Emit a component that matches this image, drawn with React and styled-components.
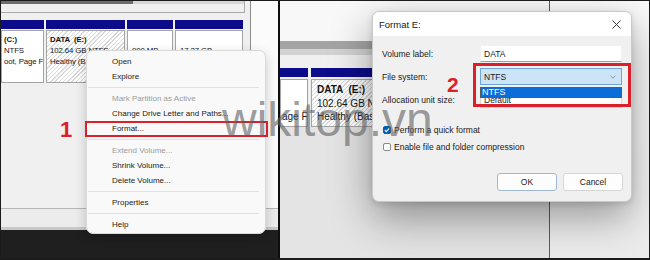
import React from "react";
import styled, { createGlobalStyle } from "styled-components";

const navy = "#0c0c8a";
const red = "#dc2029";
const hatch = "repeating-linear-gradient(135deg, #ffffff 0 2px, #d9d9d9 2px 3px)";

const GlobalStyle = createGlobalStyle`
  html, body { margin: 0; padding: 0; background: #fff; }
  body { font-family: "Liberation Sans", Arial, sans-serif; }
`;

const Frame = styled.div`
  position: relative;
  width: 650px;
  height: 260px;
  box-sizing: border-box;
  border: 1px solid #1b1b1b;
  border-bottom-width: 2px;
  display: flex;
  overflow: hidden;
  background: #1b1b1b;
  font-family: "Liberation Sans", Arial, sans-serif;
  color: #1a1a1a;
`;

const LeftPanel = styled.section`
  position: relative;
  width: 277px;
  flex-shrink: 0;
  display: flex;
  flex-direction: column;
`;

const Divider = styled.div`
  width: 2px;
  flex-shrink: 0;
  background: #0e0e0e;
`;

const RightPanel = styled.section`
  position: relative;
  flex: 1;
  display: flex;
  background: #f0f0f0;
`;

/* ---------- left: disk management behind the menu ---------- */

const LeftMain = styled.div`
  display: flex;
  height: 207px;
`;

const MgmtWindow = styled.div`
  width: 249px;
  background: #f0f0f0;
  border-right: 1px solid #8d8d8d;
  display: flex;
  flex-direction: column;
`;

const WhiteColumn = styled.div`
  flex: 1;
  background: #fbfbfb;
`;

const ScrollStrip = styled.div`
  width: 243px;
  height: 11px;
  border-right: 1px solid #a9a9a9;
  border-bottom: 1px solid #a9a9a9;
`;

const ScrollTrack = styled.div`
  height: 3px;
  background: #d5d5d5;
`;

const ScrollThumb = styled.div`
  width: 132px;
  height: 3px;
  background: #6d6d6d;
`;

const DiskRow = styled.div`
  display: flex;
  gap: ${(p) => p.$gap}px;
  margin-top: ${(p) => p.$top}px;
`;

const Partition = styled.div`
  width: ${(p) => p.$w}px;
  flex-shrink: 0;
  display: flex;
  flex-direction: column;
  gap: ${(p) => p.$gap}px;
`;

const PartHead = styled.div`
  height: 9px;
  background: ${navy};
`;

const PartBody = styled.div`
  height: ${(p) => p.$h}px;
  box-sizing: border-box;
  border: 1px solid #a5a5a5;
  background: ${(p) => (p.$selected ? hatch : "#fff")};
  padding: 3px 0 0 ${(p) => p.$pad}px;
  font-size: ${(p) => p.$fs}px;
  line-height: ${(p) => p.$lh}px;
  letter-spacing: ${(p) => p.$ls}px;
  white-space: pre;
  overflow: hidden;
  color: #151515;
`;

const PartTitle = styled.div`
  font-weight: bold;
`;

const StatusBand = styled.div`
  height: 18px;
  background: #ececec;
  border-top: 1px solid #b6b6b6;
  border-bottom: 3px solid #c8c8c8;
`;

const Taskbar = styled.div`
  flex: 1;
  background: #1f1f1f;
`;

/* ---------- context menu ---------- */

const Menu = styled.div`
  position: absolute;
  left: 85px;
  top: 49px;
  width: 180px;
  box-sizing: border-box;
  padding: 3px 0 1px;
  background: #f9f9f9;
  border: 1px solid #d9d9d9;
  border-radius: 7px;
  box-shadow: 0 4px 12px rgba(0, 0, 0, 0.2);
`;

const MenuItem = styled.div`
  height: 15px;
  line-height: 15px;
  padding-left: 25px;
  font-size: 8px;
  color: ${(p) => (p.$disabled ? "#9b9b9b" : "#1b1b1b")};
  white-space: nowrap;
`;

const MenuSep = styled.div`
  height: 1px;
  margin: 3px 6px 3px 1px;
  background: #e1e1e1;
`;

const Highlight = styled.div`
  position: absolute;
  left: ${(p) => p.$x}px;
  top: ${(p) => p.$y}px;
  width: ${(p) => p.$w}px;
  height: ${(p) => p.$h}px;
  box-sizing: border-box;
  border: ${(p) => p.$b}px solid ${red};
  pointer-events: none;
  z-index: 3;
`;

const StepNumber = styled.div`
  position: absolute;
  left: ${(p) => p.$x}px;
  top: ${(p) => p.$y}px;
  font-size: ${(p) => p.$fs}px;
  line-height: ${(p) => p.$fs}px;
  font-weight: bold;
  color: ${red};
`;

/* ---------- right: window behind the dialog ---------- */

const BackWindow = styled.div`
  width: 269px;
  border-right: 1px solid #5b5b5b;
  display: flex;
  flex-direction: column;
  background: #f0f0f0;
`;

const BlankTop = styled.div`
  height: 40px;
  background: #f8f8f8;
`;

const Band = styled.div`
  height: ${(p) => p.$h}px;
  background: ${(p) => p.$c};
`;

const BackFill = styled.div`
  flex: 1;
  background: #e4e4e4;
`;

const SideArea = styled.div`
  flex: 1;
  background: linear-gradient(#fafafa 0%, #f6f6f6 70%, #ebebeb 100%);
`;

/* ---------- format dialog ---------- */

const Dialog = styled.div`
  position: absolute;
  left: 92px;
  top: 10px;
  width: 260px;
  height: 191px;
  box-sizing: border-box;
  border: 1px solid #c9c9c9;
  border-radius: 7px;
  overflow: hidden;
  background: #f0f0f0;
  box-shadow: 0 16px 42px rgba(0, 0, 0, 0.38), 0 2px 6px rgba(0, 0, 0, 0.12);
  display: flex;
  flex-direction: column;
`;

const TitleBar = styled.div`
  height: 24px;
  background: #fff;
  display: flex;
  align-items: center;
  justify-content: space-between;
  padding: 0 10px 0 6px;
  font-size: 9.5px;
`;

const DialogBody = styled.div`
  flex: 1;
  padding: 9px 8px 0 9px;
  display: flex;
  flex-direction: column;
  font-size: 8.5px;
`;

const FieldGrid = styled.div`
  display: grid;
  grid-template-columns: 98px 142px;
  row-gap: 6px;
  align-items: center;
`;

const Label = styled.div`
  white-space: nowrap;
`;

const Field = styled.div`
  position: relative;
  height: 17px;
  box-sizing: border-box;
  display: flex;
  align-items: ${(p) => (p.$high ? "flex-start" : "center")};
  justify-content: space-between;
  padding: ${(p) => (p.$high ? "3px 5px 0 3px" : "0 5px 0 3px")};
  background: ${(p) => (p.$active ? "#cce4f7" : "#fff")};
  border: 1px solid ${(p) => (p.$active ? "#6ea6dc" : p.$plain ? "#f2f2f2" : "#d6d6d6")};
  border-bottom-color: ${(p) => (p.$plain ? "#a0a0a0" : undefined)};
`;

const DropList = styled.div`
  position: absolute;
  left: -1px;
  right: -1px;
  top: 18px;
  height: 11px;
  box-sizing: border-box;
  border: 1px solid #5a5a5a;
  background: #0a6dd8;
  color: #fff;
  font-size: 9px;
  line-height: 9px;
  padding-left: 1px;
  z-index: 2;
`;

const CheckRow = styled.div`
  display: flex;
  align-items: center;
  gap: 3px;
  height: 12px;
  margin-top: ${(p) => p.$top}px;
  padding-left: 1px;
`;

const Box = styled.div`
  width: 8px;
  height: 8px;
  box-sizing: border-box;
  border-radius: 2px;
  display: flex;
  align-items: center;
  justify-content: center;
  background: ${(p) => (p.$checked ? "#005fb8" : "#fff")};
  border: 1px solid ${(p) => (p.$checked ? "#005fb8" : "#8a8a8a")};
`;

const ButtonRow = styled.div`
  display: flex;
  justify-content: flex-end;
  gap: 6px;
  margin-top: 20px;
`;

const Button = styled.button`
  width: 60px;
  height: 18px;
  padding: 0;
  font-family: inherit;
  font-size: 8.5px;
  color: #1a1a1a;
  background: #fdfdfd;
  border: 1px solid ${(p) => (p.$primary ? "#9fb9d4" : "#d6d6d6")};
  border-radius: 3px;
`;

const Watermark = styled.div`
  position: absolute;
  left: 221px;
  top: 95px;
  font-size: 48px;
  line-height: 48px;
  color: rgba(95, 95, 95, 0.62);
  white-space: nowrap;
  pointer-events: none;
  z-index: 5;
`;

const Chevron = () => (
  <svg width="6" height="4" viewBox="0 0 6 4">
    <path d="M0.5 0.8 L3 3.2 L5.5 0.8" fill="none" stroke="#8a8a8a" strokeWidth="0.9" />
  </svg>
);

const CloseIcon = () => (
  <svg width="9" height="9" viewBox="0 0 9 9">
    <path d="M0.5 0.5 L8.5 8.5 M8.5 0.5 L0.5 8.5" stroke="#333" strokeWidth="1" />
  </svg>
);

const Tick = () => (
  <svg width="6" height="6" viewBox="0 0 6 6">
    <path d="M0.8 3.2 L2.3 4.6 L5.2 1.3" fill="none" stroke="#fff" strokeWidth="1.1" />
  </svg>
);

const leftParts = [
  { w: 43, pad: 2, lines: ["(C:)", "NTFS", "oot, Page F"] },
  { w: 79, pad: 3, lines: ["DATA  (E:)", "102.64 GB NTFS", "Healthy (Basic Data Partition)"], selected: true },
  { w: 46, pad: 4, lines: ["", "900 MB", ""] },
  { w: 68, pad: 4, lines: ["", "17.27 GB", ""] },
];

const rightParts = [
  { w: 28, pad: 1, lines: ["", "", "age F"] },
  { w: 120, pad: 5, lines: ["DATA  (E:)", "102.64 GB NTFS", "Healthy (Basic Data Partition)"], selected: true },
];

const menu = [
  { label: "Open" },
  { label: "Explore" },
  { sep: true },
  { label: "Mark Partition as Active", disabled: true },
  { label: "Change Drive Letter and Paths..." },
  { label: "Format..." },
  { sep: true },
  { label: "Extend Volume...", disabled: true },
  { label: "Shrink Volume..." },
  { label: "Delete Volume..." },
  { sep: true },
  { label: "Properties" },
  { sep: true },
  { label: "Help" },
];

function Disks({ parts, h, fs, lh, ls, gap }) {
  return parts.map((p, i) => (
    <Partition key={i} $w={p.w} $gap={gap}>
      <PartHead />
      <PartBody $h={h} $fs={fs} $lh={lh} $ls={ls} $pad={p.pad} $selected={p.selected}>
        {p.lines.map((l, j) =>
          j === 0 ? <PartTitle key={j}>{l || " "}</PartTitle> : <div key={j}>{l || " "}</div>
        )}
      </PartBody>
    </Partition>
  ));
}

export default function App() {
  return (
    <>
      <GlobalStyle />
      <Frame>
        <LeftPanel>
          <LeftMain>
            <MgmtWindow>
              <ScrollStrip>
                <ScrollTrack>
                  <ScrollThumb />
                </ScrollTrack>
              </ScrollStrip>
              <DiskRow $gap={2} $top={7}>
                <Disks parts={leftParts} h={53} fs={7.8} lh={11} ls={-0.1} gap={1} />
              </DiskRow>
            </MgmtWindow>
            <WhiteColumn />
          </LeftMain>
          <StatusBand />
          <Taskbar />

          <Menu>
            {menu.map((m, i) =>
              m.sep ? <MenuSep key={i} /> : <MenuItem key={i} $disabled={m.disabled}>{m.label}</MenuItem>
            )}
          </Menu>
          <Highlight $x={84} $y={120} $w={183} $h={16} $b={2} />
          <StepNumber $x={59} $y={118} $fs={22}>1</StepNumber>
        </LeftPanel>

        <Divider />

        <RightPanel>
          <BackWindow>
            <BlankTop />
            <Band $h={8} $c="#a4a4a4" />
            <Band $h={6} $c="#d2d2d2" />
            <DiskRow $gap={3} $top={13}>
              <Disks parts={rightParts} h={48} fs={10} lh={13.5} ls={0} gap={2} />
            </DiskRow>
            <BackFill />
          </BackWindow>
          <SideArea />

          <Dialog>
            <TitleBar>
              <span>Format E:</span>
              <CloseIcon />
            </TitleBar>
            <DialogBody>
              <FieldGrid>
                <Label>Volume label:</Label>
                <Field $plain>DATA</Field>
                <Label>File system:</Label>
                <Field $active>
                  NTFS
                  <Chevron />
                  <DropList>NTFS</DropList>
                </Field>
                <Label>Allocation unit size:</Label>
                <Field $high>
                  Default
                  <Chevron />
                </Field>
              </FieldGrid>
              <CheckRow $top={16}>
                <Box $checked>
                  <Tick />
                </Box>
                Perform a quick format
              </CheckRow>
              <CheckRow $top={5}>
                <Box />
                Enable file and folder compression
              </CheckRow>
              <ButtonRow>
                <Button $primary>OK</Button>
                <Button>Cancel</Button>
              </ButtonRow>
            </DialogBody>
          </Dialog>
          <Highlight $x={193} $y={62} $w={158} $h={44} $b={3} />
          <StepNumber $x={167} $y={73} $fs={21}>2</StepNumber>
        </RightPanel>

        <Watermark>wikitop.vn</Watermark>
      </Frame>
    </>
  );
}
